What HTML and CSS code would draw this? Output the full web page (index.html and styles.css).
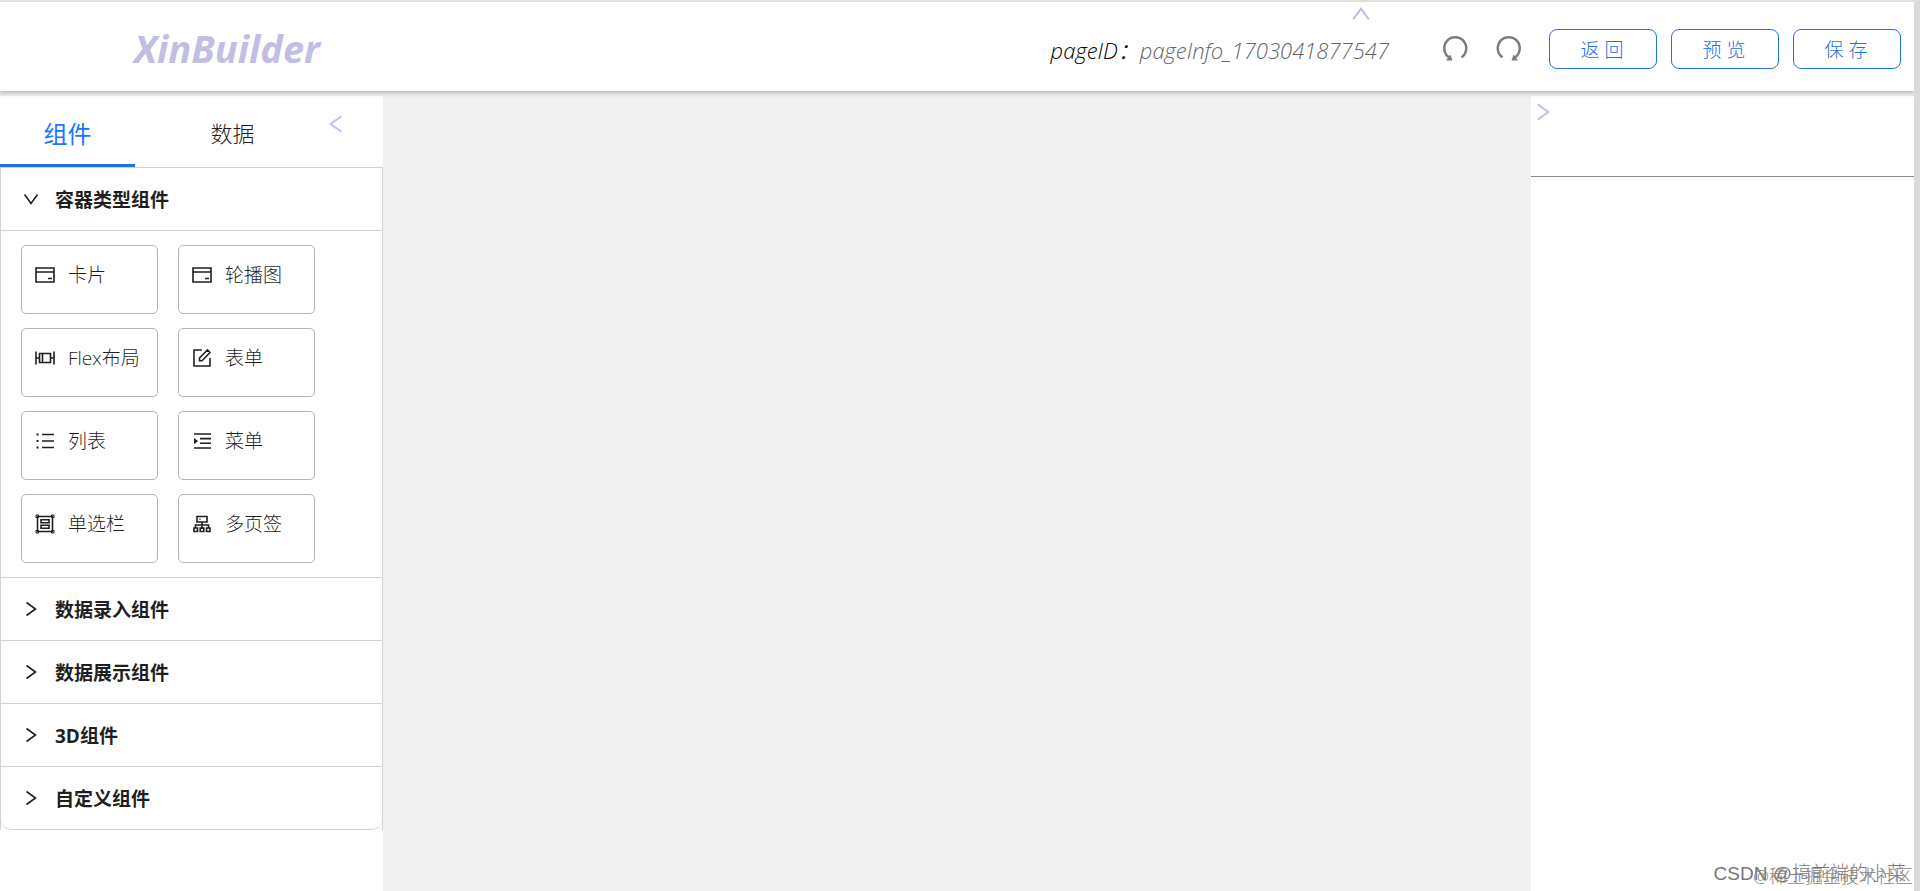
FILE: index.html
```html
<!DOCTYPE html>
<html lang="zh-CN">
<head>
<meta charset="utf-8">
<title>XinBuilder</title>
<link rel="stylesheet" href="styles.css">
</head>
<body>
<svg class="defs" aria-hidden="true">
  <symbol id="card" viewBox="0 0 20 20"><path d="M1 3h18v14H1zM1 7h18M13 13.500h4"/></symbol>
  <symbol id="flex" viewBox="0 0 20 20"><path d="M1 3.500v13M19 3.500v13M4.500 5.500h11v9h-11zM1 10h3.500M15.500 10h3.500M7.500 5.500v9"/></symbol>
  <symbol id="form" viewBox="0 0 20 20"><path d="M10 2H2v16h16v-8M7.500 12.700v-2.700L15.500 2l2.500 2.500-8 8.200z"/></symbol>
  <symbol id="list" viewBox="0 0 20 20"><path d="M7 3.500h12M7 10h12M7 16.500h12"/><path d="M1.500 3.500h2M1.500 10h2M1.500 16.500h2" stroke-width="2"/></symbol>
  <symbol id="menu" viewBox="0 0 20 20"><path d="M2 3h17M8 7.600h11M8 12.200h11M2 17h17"/><path d="M2 7v6.200L6 10z" fill="currentColor" stroke="none"/></symbol>
  <symbol id="group" viewBox="0 0 20 20"><path d="M2.500 2.500h15v15h-15zM6 5.800h8v3H6zM6 11.200h8v3H6z"/><path d="M1 1h2.500v2.500H1zM16.500 1H19v2.500h-2.500zM1 16.500h2.500V19H1zM16.500 16.500H19V19h-2.500z" stroke-width="1"/></symbol>
  <symbol id="tree" viewBox="0 0 20 20"><path d="M5 2.500h10v5.500H5zM10 8v7M3.500 14v-3h13v3M2 14h3.500v3.500H2zM8.200 14h3.600v3.500H8.200zM14.500 14H18v3.500h-3.500zM7.500 5.300h1"/></symbol>
  <symbol id="chevron" viewBox="0 0 20 20"><path d="M5.500 3.500l9 6.500-9 6.500"/></symbol>
  <symbol id="rotate" viewBox="0 0 28 28"><path d="M7.500 22.300a11 11 0 1 1 12.500 0" stroke-width="2.500"/><path d="M16.500 25.500h6.500l-4.500-6z" fill="currentColor" stroke="none"/></symbol>
</svg>
<header class="header">
  <h1 class="logo">XinBuilder</h1>
  <div class="tools">
    <p class="page-id">pageID：<span>pageInfo_1703041877547</span></p>
    <button class="rotate" aria-label="撤销"><svg class="flip"><use href="#rotate"/></svg></button>
    <button class="rotate" aria-label="重做"><svg><use href="#rotate"/></svg></button>
    <button class="action">返回</button>
    <button class="action">预览</button>
    <button class="action">保存</button>
  </div>
  <button class="fold fold-top" aria-label="收起顶栏"><svg><use href="#chevron"/></svg></button>
</header>
<main class="workspace">
  <aside class="sidebar">
    <nav class="tabs">
      <button class="tab active">组件</button>
      <button class="tab">数据</button>
      <button class="fold fold-left" aria-label="收起左栏"><svg><use href="#chevron"/></svg></button>
    </nav>
    <div class="collapse">
      <section>
        <button class="title open"><svg><use href="#chevron"/></svg>容器类型组件</button>
        <div class="grid">
          <button class="item"><svg><use href="#card"/></svg>卡片</button>
          <button class="item"><svg><use href="#card"/></svg>轮播图</button>
          <button class="item"><svg><use href="#flex"/></svg>Flex布局</button>
          <button class="item"><svg><use href="#form"/></svg>表单</button>
          <button class="item"><svg><use href="#list"/></svg>列表</button>
          <button class="item"><svg><use href="#menu"/></svg>菜单</button>
          <button class="item"><svg><use href="#group"/></svg>单选栏</button>
          <button class="item"><svg><use href="#tree"/></svg>多页签</button>
        </div>
      </section>
      <section><button class="title"><svg><use href="#chevron"/></svg>数据录入组件</button></section>
      <section><button class="title"><svg><use href="#chevron"/></svg>数据展示组件</button></section>
      <section><button class="title"><svg><use href="#chevron"/></svg>3D组件</button></section>
      <section><button class="title"><svg><use href="#chevron"/></svg>自定义组件</button></section>
    </div>
  </aside>
  <div class="canvas"></div>
  <aside class="panel">
    <div class="panel-head"><button class="fold" aria-label="收起右栏"><svg><use href="#chevron"/></svg></button></div>
  </aside>
</main>
<div class="mark mark-author">CSDN @搞前端的小菜</div>
<div class="mark mark-site">@稀土掘金技术社区</div>
</body>
</html>
```
FILE: styles.css
```css
* { box-sizing: border-box; }
body {
  margin: 0;
  min-height: 100vh;
  display: flex;
  flex-direction: column;
  border-top: 2px solid #e0e0df;
  border-right: 6px solid #dadada;
  background: #f1f1f1;
  color: #1f1f1f;
  font: 300 19px/30px "Open Sans", "Noto Sans CJK SC", sans-serif;
}
button { margin: 0; padding: 0; border: 0; background: none; color: inherit; font: inherit; cursor: pointer; }
svg { display: block; width: 20px; height: 20px; flex: none; fill: none; stroke: currentColor; stroke-width: 1.6; }
.defs { position: absolute; width: 0; height: 0; }

.header {
  position: relative;
  height: 89px;
  flex: none;
  display: flex;
  align-items: center;
  justify-content: space-between;
  padding: 0 13px 0 134px;
  background: #fff;
  box-shadow: 0 1px 5px 1px #b4b4b4;
}
.logo { margin: 0; padding-top: 3px; color: #c2bde5; font-size: 38px; line-height: 52px; font-weight: 700; font-style: italic; }
.tools { display: flex; align-items: center; padding-top: 5px; }
.page-id { margin: 0 52px 0 0; padding-top: 2px; color: #000; font-size: 22px; font-style: italic; }
.page-id span { color: #666; }
.rotate { margin-right: 26px; color: #7d7d7d; }
.rotate svg { width: 28px; height: 28px; }
.flip { transform: scaleX(-1); }
.action {
  width: 108px;
  height: 40px;
  margin-left: 14px;
  padding-top: 2px;
  border: 1px solid #1f74dc;
  border-radius: 8px;
  color: #1f6fe5;
  font-size: 19px;
  letter-spacing: 5px;
  text-indent: 3px;
}
.rotate + .action { margin-left: 0; }
.fold { color: #c2bde5; }
.fold svg { width: 24px; height: 24px; }
.fold-top { position: absolute; right: 541px; top: 0; transform: rotate(-90deg); }

.workspace { flex: 1; display: flex; padding-top: 5px; }
.sidebar { width: 20%; background: #fff; }
.tabs { display: flex; height: 71px; }
.tab { width: 135px; padding-top: 2px; font-size: 22px; }
.tab + .tab { width: 195px; }
.active { border-bottom: 3px solid #1f74dc; padding-top: 7px; color: #1677ff; font-size: 24px; font-weight: 400; }
.fold-left { align-self: flex-start; margin-top: 16px; margin-left: -6px; transform: rotate(180deg); }
.collapse { border: 1px solid #d3d3d3; border-bottom: 0; }
.collapse section + section { border-top: 1px solid #d3d3d3; }
.collapse section:last-child { border-bottom: 1px solid #d3d3d3; border-radius: 0 0 10px 10px; }
.title { display: flex; align-items: center; gap: 14px; width: 100%; height: 62px; padding: 2px 0 0 20px; font-weight: 700; }
.title svg { margin-bottom: 2px; }
.open svg { transform: rotate(90deg); }
.grid { display: grid; grid-template-columns: 137px 137px; gap: 14px 20px; padding: 14px 20px; border-top: 1px solid #d3d3d3; }
.item { display: flex; align-items: flex-start; gap: 13px; height: 69px; padding: 14px 0 0 13px; border: 1px solid #b4b4b4; border-radius: 5px; white-space: nowrap; }
.item svg { margin-top: 5px; }
.canvas { flex: 1; }
.panel { width: 20%; background: #fff; }
.panel-head { height: 81px; padding: 4px 0 0; border-bottom: 1px solid #888; }

.mark { position: absolute; bottom: 2px; color: #777; white-space: nowrap; }
.mark-author { right: 14px; font-family: "Liberation Sans", "Noto Sans CJK SC", sans-serif; }
.mark-site { right: 7px; bottom: 0; color: #888; font-size: 18px; }
```
